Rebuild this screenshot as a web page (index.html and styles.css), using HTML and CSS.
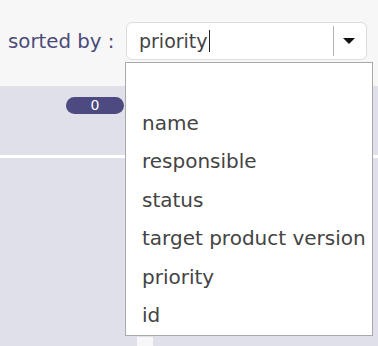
FILE: index.html
```html
<!DOCTYPE html>
<html>
<head>
    <title>Sort</title>
    <link rel="stylesheet" href="styles.css">
</head>
<body>
    <div class="toolbar">
        <span class="sort-label">sorted by :</span>
        <div class="sort-select">
            <span class="sort-value">priority</span>
            <span class="caret"></span>
            <span class="divider"></span>
            <span class="arrow"></span>
        </div>
    </div>

    <div class="board">
        <div class="board-head">
            <span class="badge">0</span>
        </div>
        <div class="board-sep"></div>
        <div class="board-body">
            <div class="column-stub"></div>
        </div>
    </div>

    <ul class="sort-menu">
        <li>&nbsp;</li>
        <li>name</li>
        <li>responsible</li>
        <li>status</li>
        <li>target product version</li>
        <li>priority</li>
        <li>id</li>
    </ul>
</body>
</html>
```

FILE: styles.css
```css
body { margin: 0; font-family: "DejaVu Sans", Verdana, sans-serif; background: #e0e0ea; overflow: hidden; }

.toolbar {
    height: 86px;
    background: #f7f7f7;
    display: flex;
    align-items: center;
    padding-left: 8px;
    box-sizing: border-box;
}
.sort-label { color: #4b4b78; font-size: 19.8px; width: 118px; margin-top: -4px; white-space: nowrap; }
.sort-select {
    position: relative;
    width: 241px;
    height: 38px;
    box-sizing: border-box;
    border: 1px solid #dcdcdc;
    border-radius: 6px;
    background: #fff;
    display: flex;
    align-items: center;
    padding-left: 12px;
    margin-top: -4px;
}
.sort-value { color: #444; font-size: 19px; }
.caret { width: 1px; height: 22px; background: #222; margin-left: 1px; }
.divider { position: absolute; left: 206px; top: 3px; width: 1px; height: 30px; background: #b5b5b5; }
.arrow {
    position: absolute;
    left: 216px;
    top: 15px;
    width: 0;
    height: 0;
    border-left: 6px solid transparent;
    border-right: 6px solid transparent;
    border-top: 6px solid #111;
}

.board-head { height: 69px; padding: 9px 0 0 66px; box-sizing: border-box; }
.badge {
    display: inline-block;
    width: 58px;
    height: 17px;
    line-height: 17px;
    border-radius: 9px;
    background: #4c4a80;
    color: #fff;
    font-size: 14px;
    text-align: center;
}
.board-sep { height: 3px; background: #fff; }
.board-body { height: 200px; position: relative; }
.column-stub { position: absolute; left: 137px; top: 179px; width: 16px; height: 20px; background: #f7f7f9; }

.sort-menu {
    position: absolute;
    left: 125px;
    top: 62px;
    width: 248px;
    height: 274px;
    box-sizing: border-box;
    margin: 0;
    padding: 2px 0 0;
    list-style: none;
    background: #fff;
    border: 1px solid #a9a9a9;
}
.sort-menu li {
    height: 38.5px;
    line-height: 38.5px;
    padding-left: 16px;
    color: #444;
    font-size: 20px;
    white-space: nowrap;
}
```
